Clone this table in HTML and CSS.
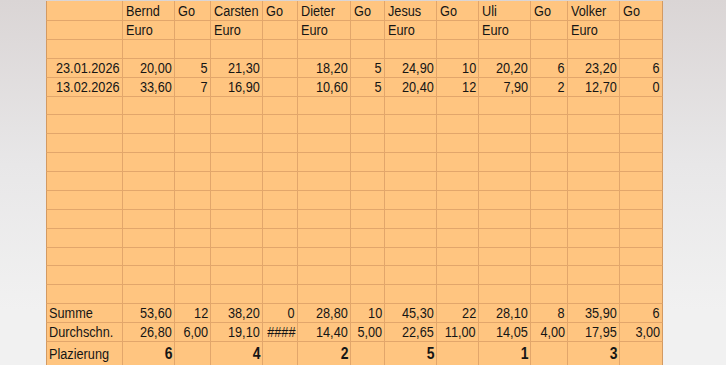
FILE: index.html
```html
<!DOCTYPE html>
<html lang="de">
<head>
<meta charset="utf-8">
<title>Tabelle</title>
<link rel="stylesheet" href="styles.css">
</head>
<body>
<div class="sheet">
  <div class="row head">
    <span></span><span><span class="v">Bernd</span></span><span><span class="v">Go</span></span><span><span class="v">Carsten</span></span><span><span class="v">Go</span></span><span><span class="v">Dieter</span></span><span><span class="v">Go</span></span><span><span class="v">Jesus</span></span><span><span class="v">Go</span></span><span><span class="v">Uli</span></span><span><span class="v">Go</span></span><span><span class="v">Volker</span></span><span><span class="v">Go</span></span>
  </div>
  <div class="row">
    <span></span><span><span class="v">Euro</span></span><span></span><span><span class="v">Euro</span></span><span></span><span><span class="v">Euro</span></span><span></span><span><span class="v">Euro</span></span><span></span><span><span class="v">Euro</span></span><span></span><span><span class="v">Euro</span></span><span></span>
  </div>
  <div class="row"><span></span><span></span><span></span><span></span><span></span><span></span><span></span><span></span><span></span><span></span><span></span><span></span><span></span></div>
  <div class="row num">
    <span><span class="v">23.01.2026</span></span><span><span class="v">20,00</span></span><span><span class="v">5</span></span><span><span class="v">21,30</span></span><span></span><span><span class="v">18,20</span></span><span><span class="v">5</span></span><span><span class="v">24,90</span></span><span><span class="v">10</span></span><span><span class="v">20,20</span></span><span><span class="v">6</span></span><span><span class="v">23,20</span></span><span><span class="v">6</span></span>
  </div>
  <div class="row num">
    <span><span class="v">13.02.2026</span></span><span><span class="v">33,60</span></span><span><span class="v">7</span></span><span><span class="v">16,90</span></span><span></span><span><span class="v">10,60</span></span><span><span class="v">5</span></span><span><span class="v">20,40</span></span><span><span class="v">12</span></span><span><span class="v">7,90</span></span><span><span class="v">2</span></span><span><span class="v">12,70</span></span><span><span class="v">0</span></span>
  </div>
  <div class="row"><span></span><span></span><span></span><span></span><span></span><span></span><span></span><span></span><span></span><span></span><span></span><span></span><span></span></div>
  <div class="row"><span></span><span></span><span></span><span></span><span></span><span></span><span></span><span></span><span></span><span></span><span></span><span></span><span></span></div>
  <div class="row"><span></span><span></span><span></span><span></span><span></span><span></span><span></span><span></span><span></span><span></span><span></span><span></span><span></span></div>
  <div class="row"><span></span><span></span><span></span><span></span><span></span><span></span><span></span><span></span><span></span><span></span><span></span><span></span><span></span></div>
  <div class="row"><span></span><span></span><span></span><span></span><span></span><span></span><span></span><span></span><span></span><span></span><span></span><span></span><span></span></div>
  <div class="row"><span></span><span></span><span></span><span></span><span></span><span></span><span></span><span></span><span></span><span></span><span></span><span></span><span></span></div>
  <div class="row"><span></span><span></span><span></span><span></span><span></span><span></span><span></span><span></span><span></span><span></span><span></span><span></span><span></span></div>
  <div class="row"><span></span><span></span><span></span><span></span><span></span><span></span><span></span><span></span><span></span><span></span><span></span><span></span><span></span></div>
  <div class="row"><span></span><span></span><span></span><span></span><span></span><span></span><span></span><span></span><span></span><span></span><span></span><span></span><span></span></div>
  <div class="row"><span></span><span></span><span></span><span></span><span></span><span></span><span></span><span></span><span></span><span></span><span></span><span></span><span></span></div>
  <div class="row"><span></span><span></span><span></span><span></span><span></span><span></span><span></span><span></span><span></span><span></span><span></span><span></span><span></span></div>
  <div class="row num lab">
    <span><span class="v">Summe</span></span><span><span class="v">53,60</span></span><span><span class="v">12</span></span><span><span class="v">38,20</span></span><span><span class="v">0</span></span><span><span class="v">28,80</span></span><span><span class="v">10</span></span><span><span class="v">45,30</span></span><span><span class="v">22</span></span><span><span class="v">28,10</span></span><span><span class="v">8</span></span><span><span class="v">35,90</span></span><span><span class="v">6</span></span>
  </div>
  <div class="row num lab">
    <span><span class="v">Durchschn.</span></span><span><span class="v">26,80</span></span><span><span class="v">6,00</span></span><span><span class="v">19,10</span></span><span><span class="v">####</span></span><span><span class="v">14,40</span></span><span><span class="v">5,00</span></span><span><span class="v">22,65</span></span><span><span class="v">11,00</span></span><span><span class="v">14,05</span></span><span><span class="v">4,00</span></span><span><span class="v">17,95</span></span><span><span class="v">3,00</span></span>
  </div>
  <div class="row num lab rank">
    <span><span class="v">Plazierung</span></span><span><span class="v">6</span></span><span></span><span><span class="v">4</span></span><span></span><span><span class="v">2</span></span><span></span><span><span class="v">5</span></span><span></span><span><span class="v">1</span></span><span></span><span><span class="v">3</span></span><span></span>
  </div>
</div>
</body>
</html>
```

FILE: styles.css
```css
html, body {
  margin: 0;
  padding: 0;
  height: 100%;
  overflow: hidden;
}

body {
  background: linear-gradient(to bottom, #dad5d5 0%, #e8e7e8 45%, #f1f1f1 85%);
  font-family: "Liberation Sans", Arial, sans-serif;
  font-size: 15.5px;
  color: #151515;
}

.sheet {
  margin: 1px 0 0 46px;
  width: 617px;
  display: flex;
  flex-direction: column;
  background: #ffc580;
}

.row {
  display: grid;
  grid-template-columns: 77px 52px 36px 52px 35px 53px 34px 52px 42px 52px 37px 52px 43px;
  height: 18.88px;
  line-height: 18px;
}

.row.head {
  height: 20px;
  line-height: 20px;
}

.row.rank {
  height: 26px;
  line-height: 23px;
}

.row > span {
  box-sizing: border-box;
  display: flex;
  justify-content: flex-start;
  border-right: 1px solid #e2a66b;
  border-bottom: 1px solid #e2a66b;
  padding: 0 2px 0 3px;
  white-space: nowrap;
  overflow: hidden;
}

.row > span:first-child {
  border-left: 1px solid #d39a62;
}

.row > span:last-child {
  border-right-color: #d39a62;
}

.v {
  flex-shrink: 0;
  transform: scaleX(0.82);
  transform-origin: left center;
}

.row.num > span {
  justify-content: flex-end;
  padding: 0 2px 0 1px;
}

.row.num > span > .v {
  transform-origin: right center;
}

.row.lab > span:first-child {
  justify-content: flex-start;
  padding: 0 2px 0 2px;
}

.row.lab > span:first-child > .v {
  transform-origin: left center;
}

.row.rank > span {
  font-weight: bold;
  font-size: 17px;
}

.row.rank > span:first-child {
  font-weight: normal;
  font-size: 15.5px;
}
```
